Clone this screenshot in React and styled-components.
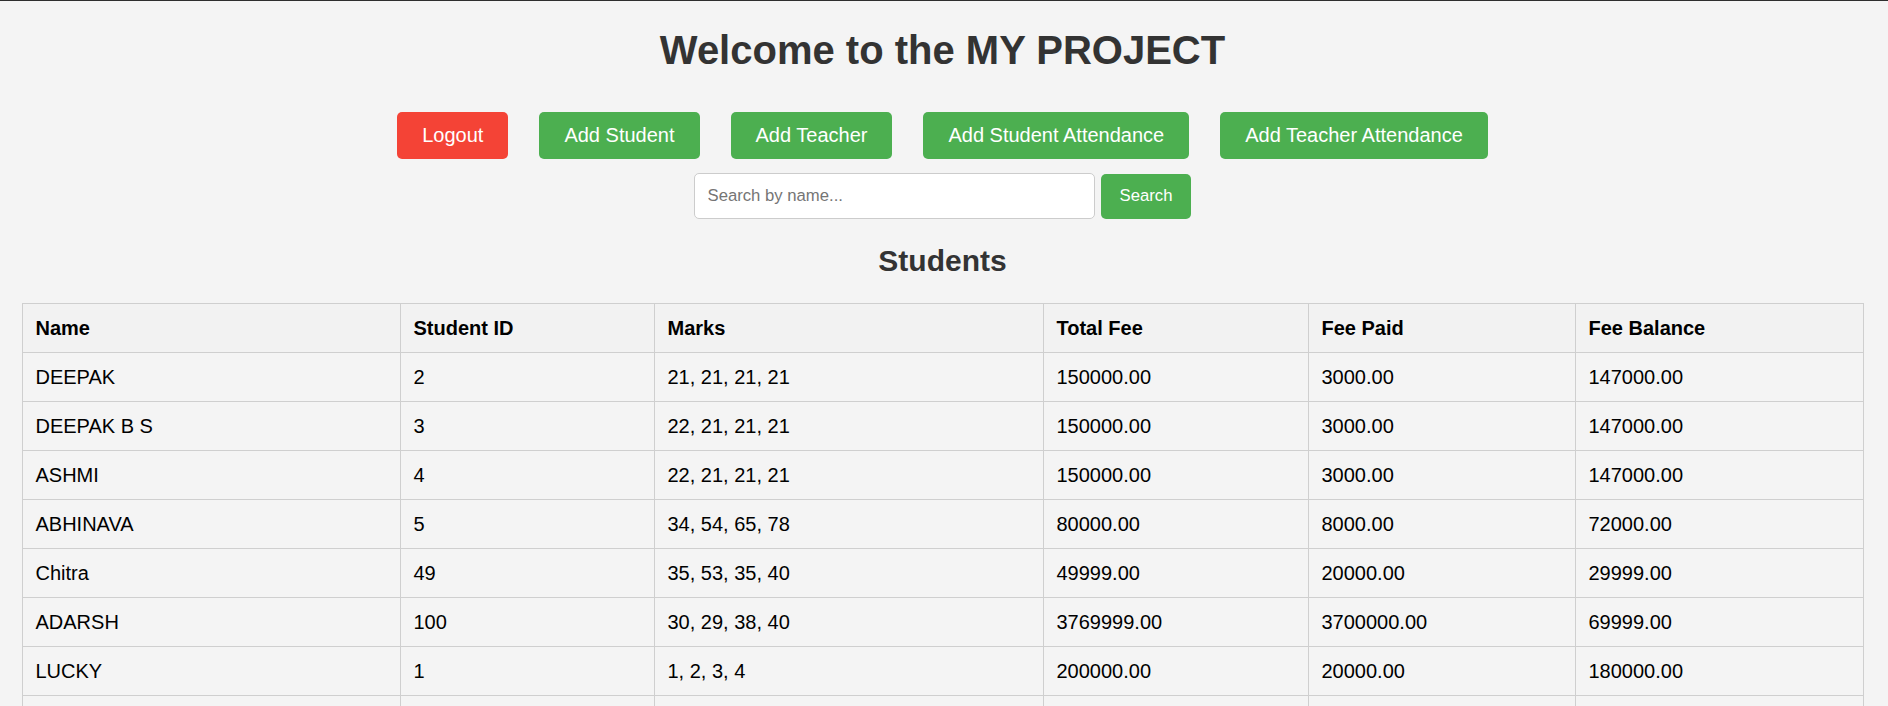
import React, { useState } from 'react';
import styled, { createGlobalStyle } from 'styled-components';

const GlobalStyle = createGlobalStyle`
  html {
    background: #f4f4f4;
  }
  body {
    margin: 0;
    border-top: 1px solid #2e2e2e;
    background: #f4f4f4;
    font-family: "Liberation Sans", Arial, sans-serif;
    color: #000;
  }
`;

const Wrapper = styled.div`
  display: flex;
  flex-direction: column;
  align-items: center;
  padding: 0 25px 0 22px;
`;

const Title = styled.h1`
  margin: 26px 0 0;
  font-size: 40px;
  line-height: 46px;
  font-weight: bold;
  color: #333;
`;

const ButtonRow = styled.div`
  display: flex;
  gap: 31px;
  margin-top: 39px;
`;

const ActionButton = styled.button`
  height: 47px;
  padding: 0 25px;
  border: none;
  border-radius: 5px;
  background: ${(p) => (p.$danger ? '#f44336' : '#4caf50')};
  color: #fff;
  font-family: inherit;
  font-size: 20px;
  cursor: pointer;
`;

const SearchRow = styled.form`
  display: flex;
  align-items: center;
  gap: 6px;
  margin-top: 14px;
`;

const SearchInput = styled.input`
  box-sizing: border-box;
  width: 401px;
  height: 46px;
  padding: 0 12.5px;
  border: 1px solid #ccc;
  border-radius: 5px;
  background: #fff;
  font-family: inherit;
  font-size: 16.7px;
  color: #333;
  outline: none;
  &::placeholder {
    color: #757575;
  }
`;

const SearchButton = styled.button`
  width: 90px;
  height: 45px;
  border: none;
  border-radius: 5px;
  background: #4caf50;
  color: #fff;
  font-family: inherit;
  font-size: 16.7px;
  cursor: pointer;
`;

const SectionTitle = styled.h2`
  margin: 25px 0 0;
  font-size: 30px;
  line-height: 34px;
  font-weight: bold;
  color: #333;
`;

const Table = styled.table`
  width: 100%;
  margin-top: 25px;
  border-collapse: collapse;
  table-layout: fixed;
  font-size: 20px;
  th, td {
    border: 1px solid #cfcfcf;
    padding: 12px 13px;
    height: 24px;
    line-height: 24px;
    text-align: left;
    white-space: nowrap;
  }
  th {
    font-weight: bold;
    background: #f2f2f2;
  }
`;

const columns = [
  { label: 'Name', width: 378 },
  { label: 'Student ID', width: 254 },
  { label: 'Marks', width: 389 },
  { label: 'Total Fee', width: 265 },
  { label: 'Fee Paid', width: 267 },
  { label: 'Fee Balance', width: 288 },
];

const students = [
  ['DEEPAK', '2', '21, 21, 21, 21', '150000.00', '3000.00', '147000.00'],
  ['DEEPAK B S', '3', '22, 21, 21, 21', '150000.00', '3000.00', '147000.00'],
  ['ASHMI', '4', '22, 21, 21, 21', '150000.00', '3000.00', '147000.00'],
  ['ABHINAVA', '5', '34, 54, 65, 78', '80000.00', '8000.00', '72000.00'],
  ['Chitra', '49', '35, 53, 35, 40', '49999.00', '20000.00', '29999.00'],
  ['ADARSH', '100', '30, 29, 38, 40', '3769999.00', '3700000.00', '69999.00'],
  ['LUCKY', '1', '1, 2, 3, 4', '200000.00', '20000.00', '180000.00'],
  ['', '', '', '', '', ''],
];

function App() {
  const [query, setQuery] = useState('');

  const onSubmit = (e) => {
    e.preventDefault();
  };

  return (
    <>
      <GlobalStyle />
      <Wrapper>
        <Title>Welcome to the MY PROJECT</Title>
        <ButtonRow>
          <ActionButton $danger>Logout</ActionButton>
          <ActionButton>Add Student</ActionButton>
          <ActionButton>Add Teacher</ActionButton>
          <ActionButton>Add Student Attendance</ActionButton>
          <ActionButton>Add Teacher Attendance</ActionButton>
        </ButtonRow>
        <SearchRow onSubmit={onSubmit}>
          <SearchInput
            placeholder="Search by name..."
            value={query}
            onChange={(e) => setQuery(e.target.value)}
          />
          <SearchButton type="submit">Search</SearchButton>
        </SearchRow>
        <SectionTitle>Students</SectionTitle>
        <Table>
          <colgroup>
            {columns.map((c) => (
              <col key={c.label} style={{ width: c.width }} />
            ))}
          </colgroup>
          <thead>
            <tr>
              {columns.map((c) => (
                <th key={c.label}>{c.label}</th>
              ))}
            </tr>
          </thead>
          <tbody>
            {students.map((row, i) => (
              <tr key={i}>
                {row.map((cell, j) => (
                  <td key={j}>{cell}</td>
                ))}
              </tr>
            ))}
          </tbody>
        </Table>
      </Wrapper>
    </>
  );
}

export default App;
